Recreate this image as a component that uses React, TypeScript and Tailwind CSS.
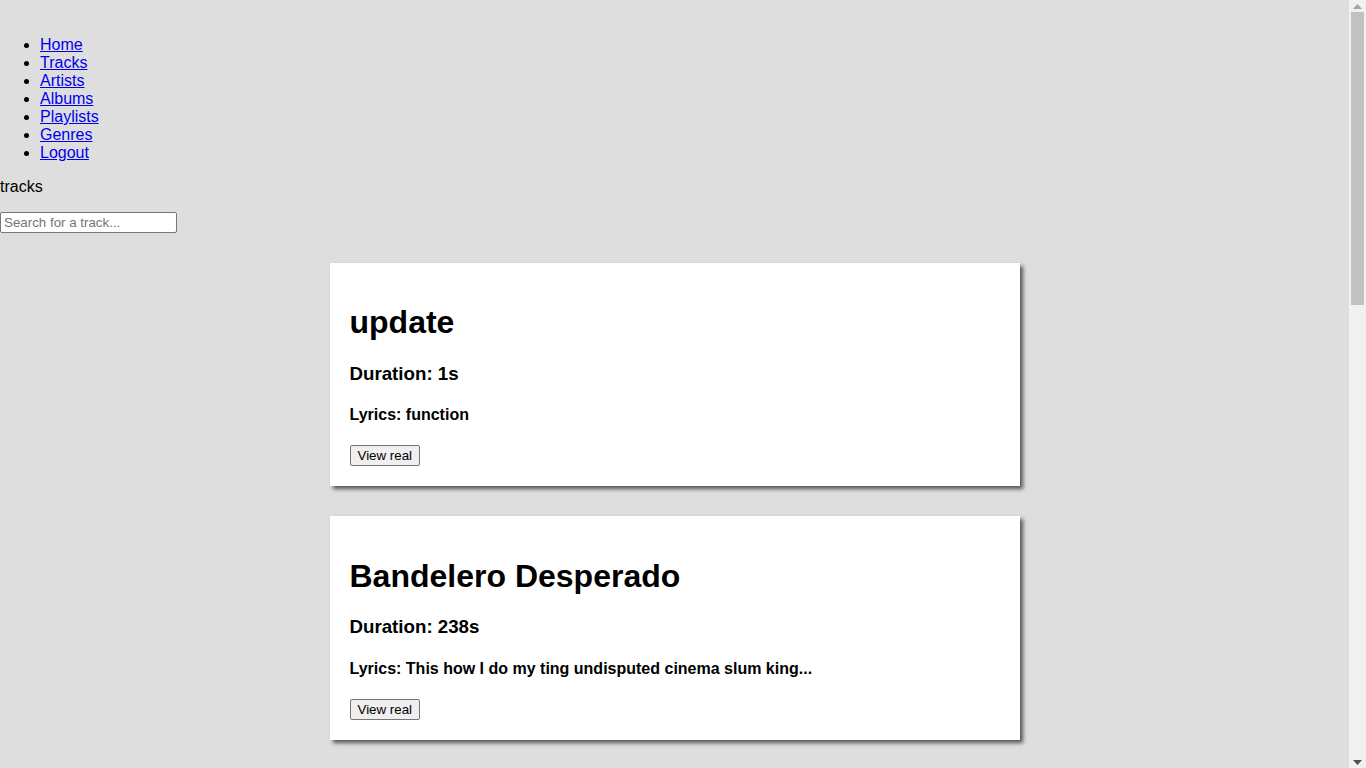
import React from "react";

const tracks = [
  { name: "update", duration: 1, lyrics: "function" },
  { name: "Bandelero Desperado", duration: 238, lyrics: "This how I do my ting undisputed cinema slum king..." },
];

const links = ["Home", "Tracks", "Artists", "Albums", "Playlists", "Genres", "Logout"];

function Scrollbar() {
  return (
    <div className="w-[17px] h-screen shrink-0 bg-[#f1f1f1] flex flex-col items-center">
      <div className="h-[12px] w-full flex items-center justify-center">
        <svg width="9" height="5" viewBox="0 0 9 5">
          <polygon points="4.5,0 9,5 0,5" fill="#a3a3a3" />
        </svg>
      </div>
      <div className="w-[13px] h-[293px] bg-[#c1c1c1]" />
      <div className="flex-1" />
      <div className="h-[12px] w-full flex items-center justify-center">
        <svg width="9" height="5" viewBox="0 0 9 5">
          <polygon points="0,0 9,0 4.5,5" fill="#505050" />
        </svg>
      </div>
    </div>
  );
}

export default function App() {
  return (
    <div className="h-screen overflow-hidden flex bg-[#dedede] text-black font-['Liberation_Sans',Arial,sans-serif] text-[16px] leading-[normal]">
      <div className="flex-1 min-w-0">
        <ul className="list-disc pl-10 pt-[36px] mb-4">
          {links.map((l) => (
            <li key={l}>
              <a href="#" className="text-[#0000ee] underline">
                {l}
              </a>
            </li>
          ))}
        </ul>
        <p className="mb-[16px]">tracks</p>
        <input
          type="text"
          placeholder="Search for a track..."
          className="block w-[177px] h-[21px] border border-[#767676] rounded-[2px] bg-white px-[3px] py-[1px] text-[13.33px] placeholder:text-[#757575] font-['Liberation_Sans',Arial,sans-serif]"
        />
        <div className="flex flex-col items-center gap-[30px] mt-[30px]">
          {tracks.map((t) => (
            <div key={t.name} className="w-[690px] bg-white p-5 shadow-[3px_3px_4px_#555]">
              <h1 className="text-[32px] font-bold mt-[21.44px] mb-[21.44px]">{t.name}</h1>
              <h3 className="text-[18.72px] font-bold mb-[18.72px]">Duration: {t.duration}s</h3>
              <h4 className="text-[16px] font-bold mt-[21.28px] mb-[21.28px]">Lyrics: {t.lyrics}</h4>
              <button className="block h-[21px] px-[7px] border border-[#767676] rounded-[2px] bg-[#efefef] text-[13.33px] leading-[normal] text-black font-['Liberation_Sans',Arial,sans-serif]">
                View real
              </button>
            </div>
          ))}
        </div>
      </div>
      <Scrollbar />
    </div>
  );
}
